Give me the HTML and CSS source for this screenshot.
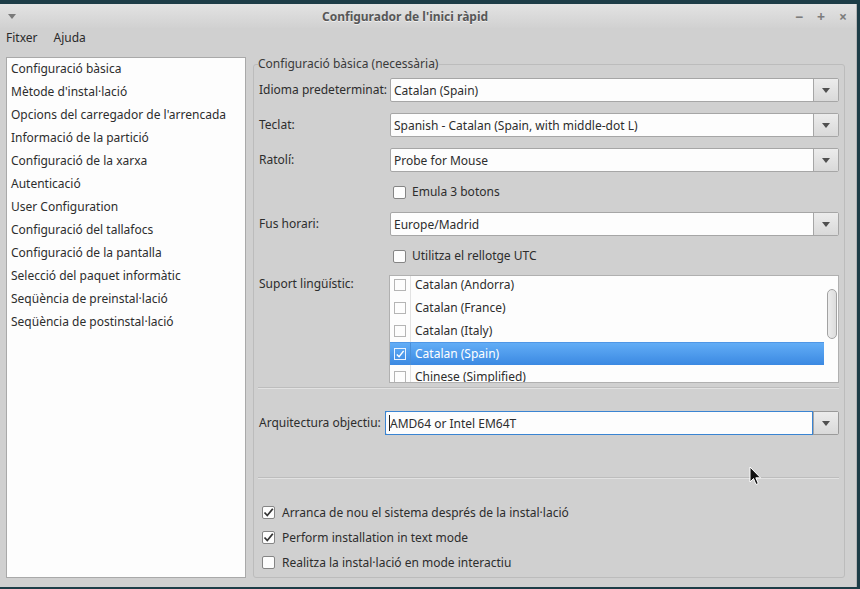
FILE: index.html
```html
<!DOCTYPE html>
<html lang="ca">
<head>
<meta charset="utf-8">
<title>Configurador de l'inici ràpid</title>
<link rel="stylesheet" href="styles.css">
</head>
<body>
<div class="window">
  <div class="titlebar">
    <span class="wmenu"></span>
    <span class="title">Configurador de l'inici ràpid</span>
    <div class="wbtns"><span>−</span><span>+</span><span>×</span></div>
  </div>
  <div class="menubar"><span>Fitxer</span><span>Ajuda</span></div>
  <div class="content">
    <ul class="sidebar">
      <li>Configuració bàsica</li>
      <li>Mètode d'instal·lació</li>
      <li>Opcions del carregador de l'arrencada</li>
      <li>Informació de la partició</li>
      <li>Configuració de la xarxa</li>
      <li>Autenticació</li>
      <li>User Configuration</li>
      <li>Configuració del tallafocs</li>
      <li>Configuració de la pantalla</li>
      <li>Selecció del paquet informàtic</li>
      <li>Seqüència de preinstal·lació</li>
      <li>Seqüència de postinstal·lació</li>
    </ul>
    <fieldset class="group">
      <legend>Configuració bàsica (necessària)</legend>
      <div class="form">
        <div class="row"><span class="label">Idioma predeterminat:</span><div class="combo"><span class="ctext">Catalan (Spain)</span><span class="cbtn"></span></div></div>
        <div class="row"><span class="label">Teclat:</span><div class="combo"><span class="ctext">Spanish - Catalan (Spain, with middle-dot L)</span><span class="cbtn"></span></div></div>
        <div class="row"><span class="label">Ratolí:</span><div class="combo"><span class="ctext">Probe for Mouse</span><span class="cbtn"></span></div></div>
        <div class="row chkrow"><span class="label"></span><label class="check"><span class="box"></span>Emula 3 botons</label></div>
        <div class="row"><span class="label">Fus horari:</span><div class="combo"><span class="ctext">Europe/Madrid</span><span class="cbtn"></span></div></div>
        <div class="row chkrow"><span class="label"></span><label class="check"><span class="box"></span>Utilitza el rellotge UTC</label></div>
        <div class="row listrow"><span class="label">Suport lingüístic:</span>
          <div class="list">
            <div class="items">
              <div class="item"><span class="icol"><span class="ibox"></span></span><span class="itext">Catalan (Andorra)</span></div>
              <div class="item"><span class="icol"><span class="ibox"></span></span><span class="itext">Catalan (France)</span></div>
              <div class="item"><span class="icol"><span class="ibox"></span></span><span class="itext">Catalan (Italy)</span></div>
              <div class="item sel"><span class="icol"><span class="ibox on"><svg width="11" height="11" viewBox="0 0 11 11"><path d="M2 5.5 L4.5 8 L9.5 1.5" fill="none" stroke="#fff" stroke-width="1.6"/></svg></span></span><span class="itext">Catalan (Spain)</span></div>
              <div class="item"><span class="icol"><span class="ibox"></span></span><span class="itext">Chinese (Simplified)</span></div>
            </div>
            <div class="scroll"><span class="thumb"></span></div>
          </div>
        </div>
      </div>
      <div class="sep sep1"></div>
      <div class="row archrow"><span class="label2">Arquitectura objectiu:</span><div class="combo focus"><span class="ctext"><span class="caret"></span>AMD64 or Intel EM64T</span><span class="cbtn"></span></div></div>
      <div class="sep sep2"></div>
      <div class="bottom">
        <label class="check"><span class="box"><svg width="11" height="11" viewBox="0 0 11 11"><path d="M1.5 5.5 L4.3 8.5 L9.8 1.8" fill="none" stroke="#333" stroke-width="1.8"/></svg></span>Arranca de nou el sistema després de la instal·lació</label>
        <label class="check"><span class="box"><svg width="11" height="11" viewBox="0 0 11 11"><path d="M1.5 5.5 L4.3 8.5 L9.8 1.8" fill="none" stroke="#333" stroke-width="1.8"/></svg></span>Perform installation in text mode</label>
        <label class="check"><span class="box"></span>Realitza la instal·lació en mode interactiu</label>
      </div>
    </fieldset>
  </div>
  <svg class="cursor" width="14" height="21" viewBox="0 0 14 21"><path d="M1 1 L1 16 L4.5 12.5 L7 18.5 L9.3 17.5 L6.8 11.8 L11.5 11.8 Z" fill="#111" stroke="#fff" stroke-width="1" stroke-linejoin="round"/></svg>
</div>
</body>
</html>
```
FILE: styles.css
```css
* { box-sizing: border-box; margin: 0; padding: 0; }
html, body { width: 860px; height: 589px; overflow: hidden; }
body {
  background: #1d3d47;
  font-family: "Noto Sans", "Open Sans", sans-serif;
  font-size: 12px;
  line-height: 18px;
  color: #2d2d2d;
  padding: 4px 3px 2px 0;
  font-variant-ligatures: none;
  font-feature-settings: "locl" 0, "liga" 0;
}
.window {
  position: relative;
  width: 857px;
  height: 583px;
  background: #d0d0d0;
  display: flex;
  flex-direction: column;
  border-right: 1px solid #b5b5b5;
}
.titlebar {
  height: 24px;
  flex: none;
  display: flex;
  align-items: center;
  padding-top: 1px;
  background: linear-gradient(#e3e3e3, #d1d1d1);
}
.wmenu {
  width: 0; height: 0;
  margin-left: 8px;
  border-left: 4px solid transparent;
  border-right: 4px solid transparent;
  border-top: 5px solid #7a7a7a;
}
.title {
  margin-left: 306px;
  font-weight: bold;
  color: #575757;
  text-shadow: 0 1px 0 rgba(255,255,255,0.6);
}
.wbtns {
  margin-left: auto;
  margin-right: 8px;
  display: flex;
  gap: 12px;
  color: #7c7c7c;
  font-size: 14px;
  font-weight: bold;
}
.wbtns span { width: 10px; text-align: center; }
.menubar {
  height: 19px;
  flex: none;
  display: flex;
  align-items: center;
  gap: 16px;
  padding-left: 6px;
  color: #2a2a2a;
}
.content {
  flex: 1;
  display: flex;
  gap: 7px;
  padding: 8px 11px 9px 6px;
  min-height: 0;
}
.sidebar {
  list-style: none;
  width: 240px;
  flex: none;
  margin-top: 2px;
  background: #fdfdfd;
  border: 1px solid #a9a9a9;
}
.sidebar li {
  height: 23px;
  line-height: 22px;
  padding-left: 4px;
  white-space: nowrap;
}
.group {
  flex: 1;
  border: 1px solid #bcbcbc;
  border-radius: 3px;
  padding: 0 5px 2px 5px;
  min-width: 0;
}
.group legend {
  margin-left: -1px;
  padding: 0 1px 0 0;
  line-height: 18px;
  color: #3a3a3a;
}
.form {
  display: flex;
  flex-direction: column;
  gap: 11px;
  margin-top: 5px;
}
.row { display: flex; align-items: center; }
.label { width: 131px; flex: none; white-space: nowrap; }
.chkrow { height: 18px; }
.chkrow .check { margin-left: 3px; }
.combo {
  flex: 1;
  height: 24px;
  display: flex;
  background: #fdfdfd;
  border: 1px solid #a6a6a6;
  border-radius: 2px;
}
.ctext {
  flex: 1;
  padding-left: 3px;
  line-height: 23px;
  white-space: nowrap;
  overflow: hidden;
  position: relative;
}
.cbtn {
  width: 25px;
  flex: none;
  display: flex;
  align-items: center;
  justify-content: center;
  background: linear-gradient(#ececec, #d9d9d9);
  border-left: 1px solid #a6a6a6;
}
.cbtn::after {
  content: "";
  width: 0; height: 0;
  border-left: 4px solid transparent;
  border-right: 4px solid transparent;
  border-top: 5px solid #505050;
}
.combo.focus { border-color: #9a9a9a; }
.combo.focus .ctext {
  border: 1px solid #3a84d2;
  margin: -1px 0 -1px -1px;
  line-height: 23px;
  padding-left: 4px;
}
.caret {
  position: absolute;
  left: 3px;
  top: 3px;
  width: 1px;
  height: 16px;
  background: #222;
}
.check {
  display: flex;
  align-items: center;
  gap: 6px;
  white-space: nowrap;
}
.box {
  width: 13px;
  height: 13px;
  flex: none;
  background: #fdfdfd;
  border: 1px solid #858585;
  border-radius: 2px;
  display: flex;
  align-items: center;
  justify-content: center;
}
.listrow { align-items: flex-start; margin-top: -1px; }
.list {
  flex: 1;
  margin-left: -1px;
  height: 108px;
  background: #fdfdfd;
  border: 1px solid #b0b0b0;
  display: flex;
  overflow: hidden;
}
.items { flex: 1; margin-top: -3px; }
.item { height: 23px; display: flex; align-items: center; }
.icol {
  width: 21px;
  height: 100%;
  flex: none;
  display: flex;
  align-items: center;
  justify-content: center;
  border-right: 1px solid #e2e2e2;
}
.ibox {
  width: 12px;
  height: 12px;
  border: 1px solid #b5b5b5;
  background: #fdfdfd;
  display: flex;
  align-items: center;
  justify-content: center;
}
.itext { padding-left: 4px; white-space: nowrap; }
.item.sel {
  background: linear-gradient(#62adf6, #3b89e2);
  border-top: 1px solid #4f97e6;
  color: #fff;
}
.item.sel .icol { border-right-color: #4a8fd8; }
.ibox.on { background: transparent; border-color: #eaf3ff; }
.scroll {
  width: 14px;
  flex: none;
  padding: 13px 2px 0 3px;
}
.thumb {
  display: block;
  width: 10px;
  height: 50px;
  background: linear-gradient(90deg, #ececec, #dcdcdc);
  border: 1px solid #a2a2a2;
  border-radius: 5px;
}
.sep {
  height: 2px;
  background: #bdbdbd;
  margin-left: -1px;
  border-bottom: 1px solid #e2e2e2;
}
.sep1 { margin-top: 4px; }
.archrow { margin-top: 22px; }
.label2 { width: 126px; flex: none; white-space: nowrap; }
.sep2 { margin-top: 42px; }
.bottom {
  margin-top: 21px;
  display: flex;
  flex-direction: column;
}
.bottom .check { height: 25px; margin-left: 3px; gap: 7px; }
.cursor { position: absolute; left: 749px; top: 462px; }
```
